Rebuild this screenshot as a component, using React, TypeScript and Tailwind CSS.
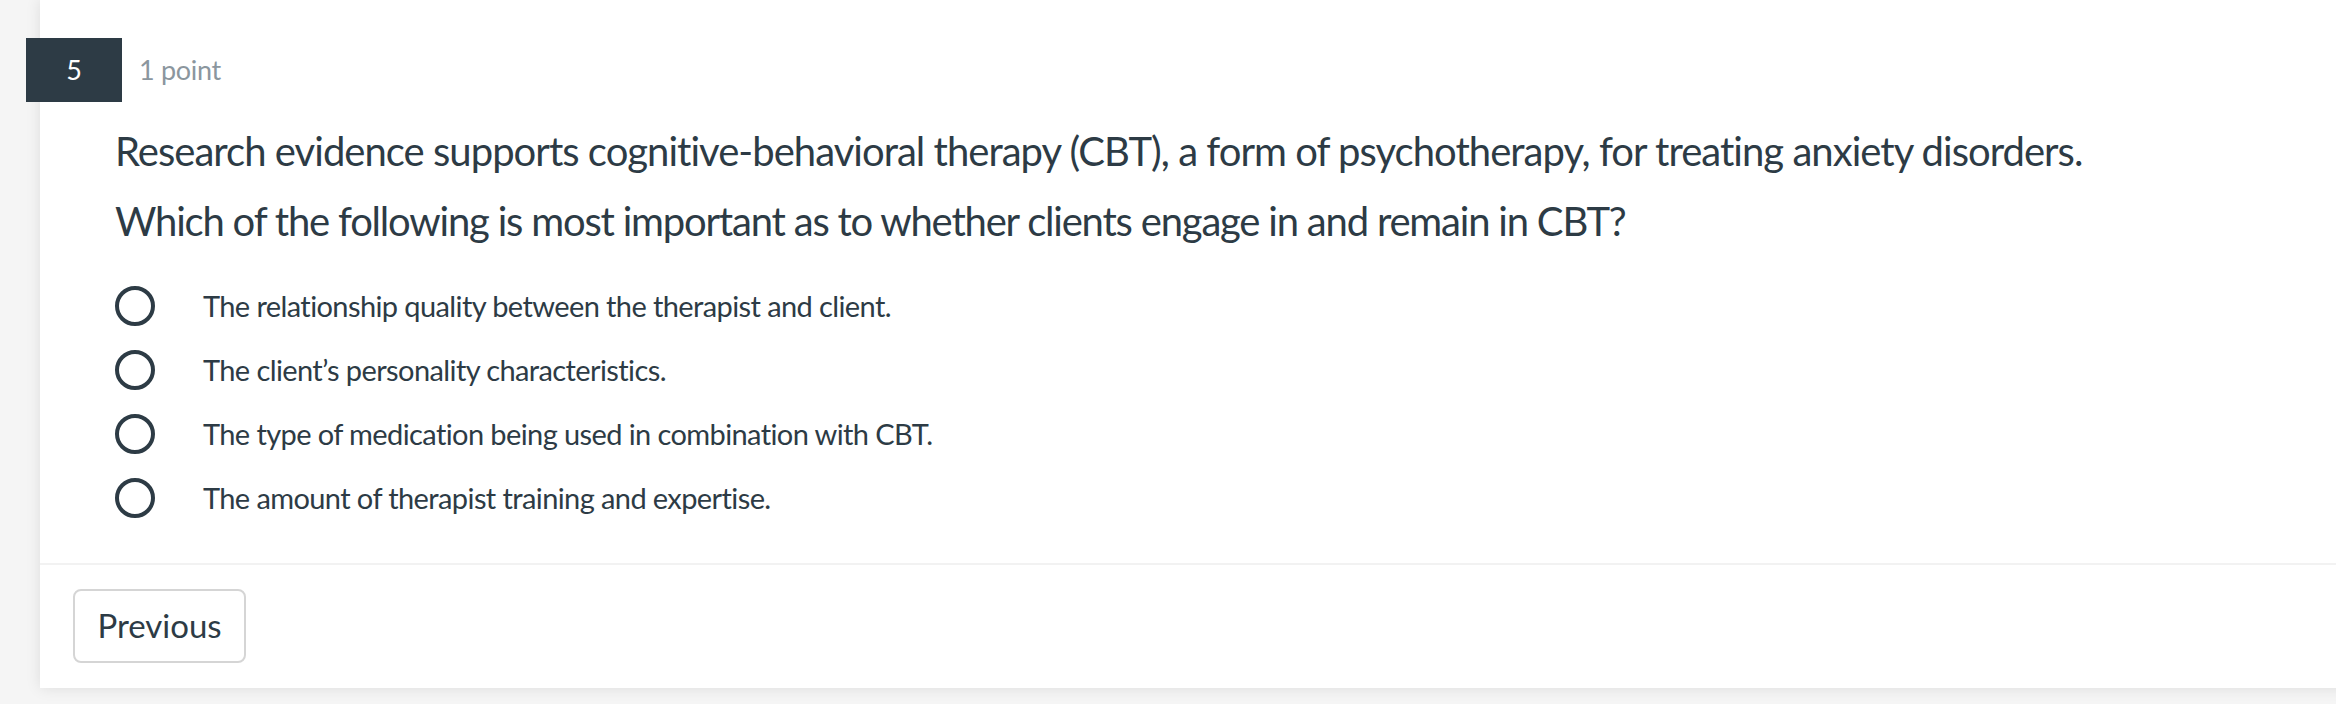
const options = [
  'The relationship quality between the therapist and client.',
  'The client\u2019s personality characteristics.',
  'The type of medication being used in combination with CBT.',
  'The amount of therapist training and expertise.',
]

export default function App() {
  return (
    <div
      className="min-h-[704px] w-full overflow-hidden bg-[#f5f5f5] pl-[40px] text-[#2d3b45]"
      style={{ fontFamily: 'Lato, "Noto Sans", sans-serif' }}
    >
      <div className="h-[688px] w-[2400px] bg-white pt-[38px] shadow-[0_0_14px_rgba(0,0,0,0.10)]">
        {/* Question header */}
        <div className="flex h-16 items-center">
          <div className="-ml-[14px] flex h-16 w-24 items-center justify-center bg-[#2d3b45] text-[27px] text-white">
            5
          </div>
          <span className="ml-[17px] text-[27px] tracking-[-0.3px] text-[#8b969e]">1 point</span>
        </div>

        {/* Question text */}
        <div className="mt-[25px] pl-[75px] text-[40px] leading-[48px]">
          <p className="tracking-[-0.97px]">
            Research evidence supports cognitive-behavioral therapy (CBT), a form of psychotherapy, for treating anxiety
            disorders.
          </p>
          <p className="mt-[22px] tracking-[-1.2px]">
            Which of the following is most important as to whether clients engage in and remain in CBT?
          </p>
        </div>

        {/* Answers */}
        <div className="mt-[29px] pl-[75px]">
          {options.map((opt) => (
            <label key={opt} className="flex h-16 items-center">
              <span className="h-[40px] w-[40px] shrink-0 rounded-full border-[4px] border-[#2d3b45]" />
              <span className="ml-[48px] text-[29px] tracking-[-0.6px]">{opt}</span>
            </label>
          ))}
        </div>

        <div className="mt-[33px] h-[2px] bg-[#f2f2f2]" />

        {/* Footer */}
        <div className="pl-[33px] pt-[24px]">
          <button className="h-[74px] w-[173px] rounded-lg border-2 border-[#d5d5d5] bg-white text-[33px] text-[#2d3b45]">
            Previous
          </button>
        </div>
      </div>
    </div>
  )
}
